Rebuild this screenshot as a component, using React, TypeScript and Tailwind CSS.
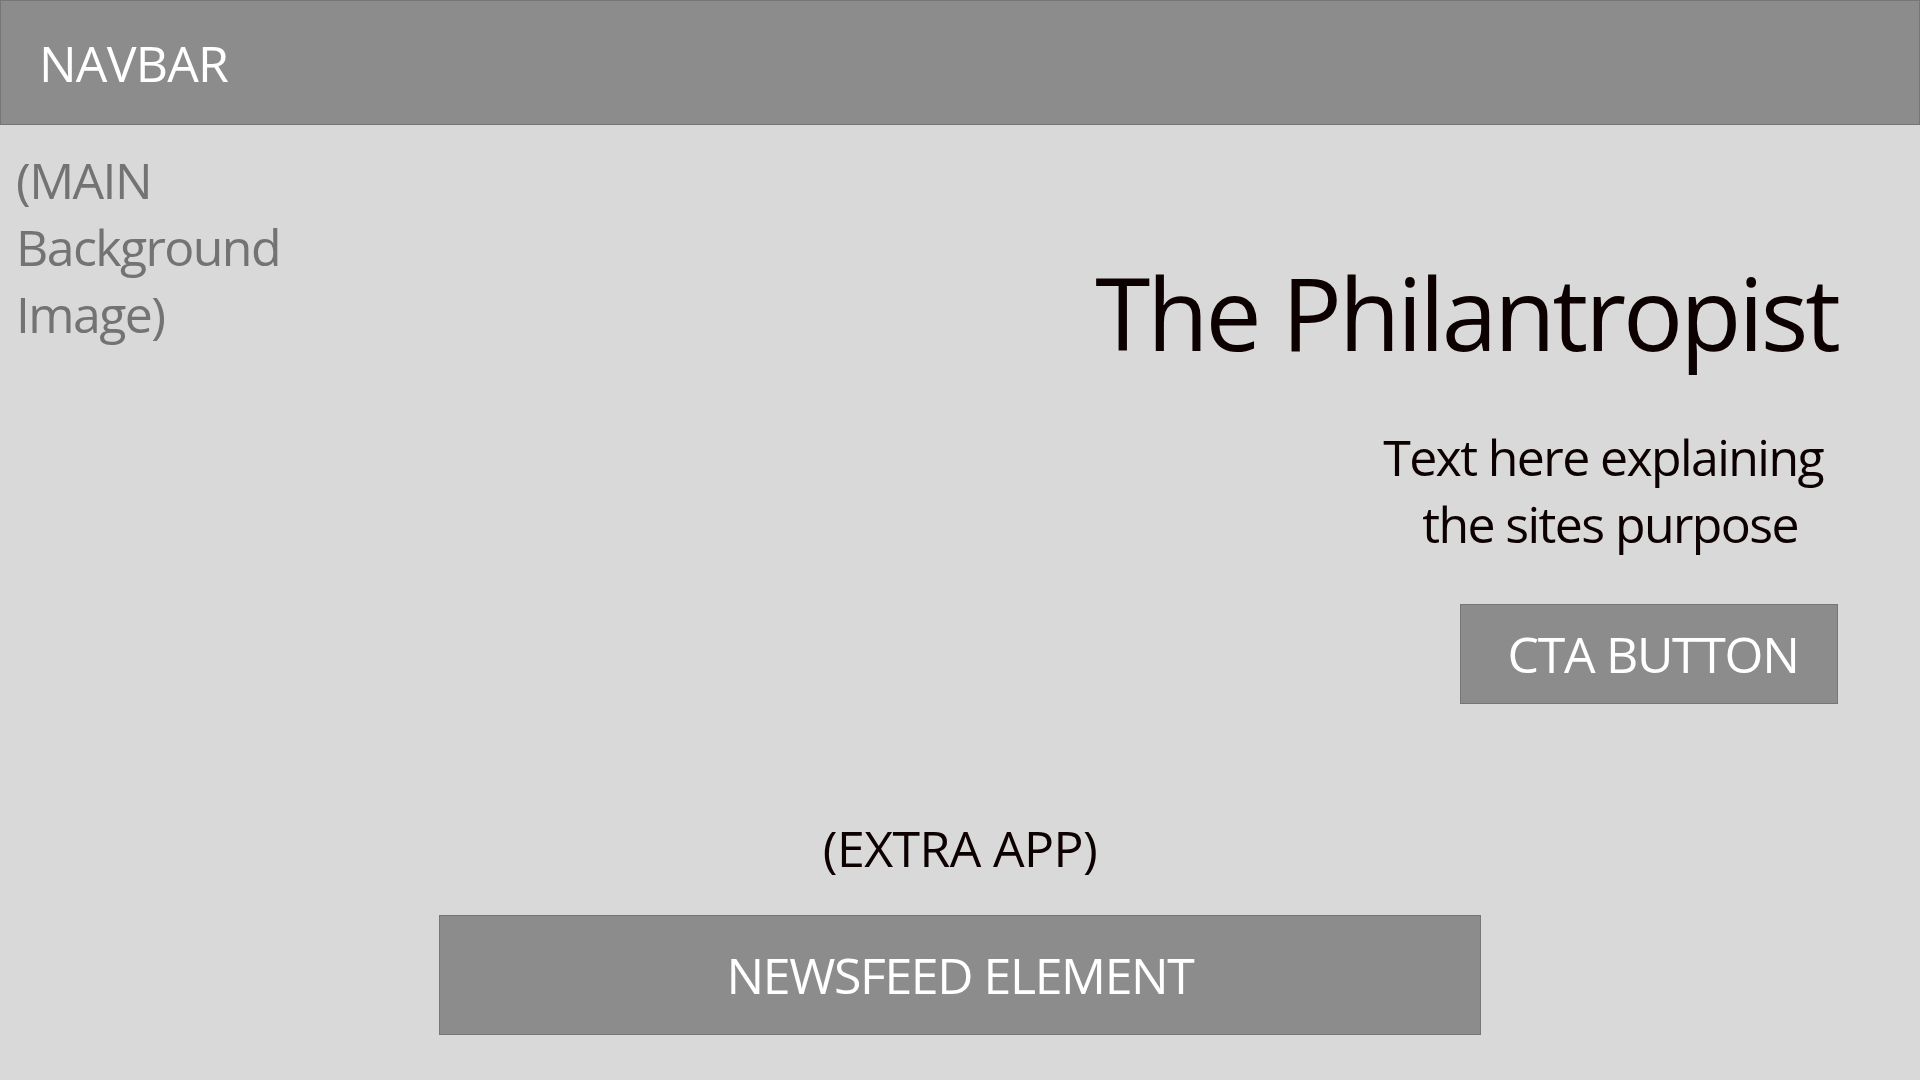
export default function App() {
  return (
    <div className="min-h-screen bg-[#d9d9d9] font-['Open_Sans',sans-serif]">
      {/* Navbar */}
      <nav className="h-[125px] bg-[#8c8c8c] border border-[#767676] flex items-center pl-[38px]">
        <span className="text-[50px] leading-none tracking-[-0.8px] text-white">NAVBAR</span>
      </nav>

      <main>
        {/* Hero */}
        <section className="flex justify-between pr-[82px]">
          <p className="pl-[16px] pt-[22px] text-[50px] leading-[67px] tracking-[-1.6px] text-[#737373]">
            (MAIN
            <br />
            Background
            <br />
            Image)
          </p>

          <div className="flex flex-col items-end pt-[137px]">
            <h1 className="text-[100px] leading-none tracking-[-3px] text-[#0d0000]">The Philantropist</h1>
            <p className="mt-[62px] mr-[15px] flex flex-col items-center text-[50px] leading-[67px] tracking-[-1.6px] text-[#0d0000]">
              <span>Text here explaining</span>
              <span className="pl-[14px]">the sites purpose</span>
            </p>
            <button className="mt-[46px] w-[378px] h-[100px] pl-[8px] bg-[#8c8c8c] border border-[#767676] text-white text-[50px] leading-none tracking-[-1.3px]">
              CTA BUTTON
            </button>
          </div>
        </section>

        {/* Extra app + newsfeed */}
        <section className="flex flex-col items-center">
          <p className="mt-[111px] text-[50px] leading-[67px] tracking-[-0.6px] text-[#0d0000]">(EXTRA APP)</p>
          <div className="mt-[33px] w-[1042px] h-[120px] bg-[#8c8c8c] border border-[#767676] flex items-center justify-center">
            <span className="text-[50px] leading-none tracking-[-1.4px] text-white">NEWSFEED ELEMENT</span>
          </div>
        </section>
      </main>
    </div>
  );
}
